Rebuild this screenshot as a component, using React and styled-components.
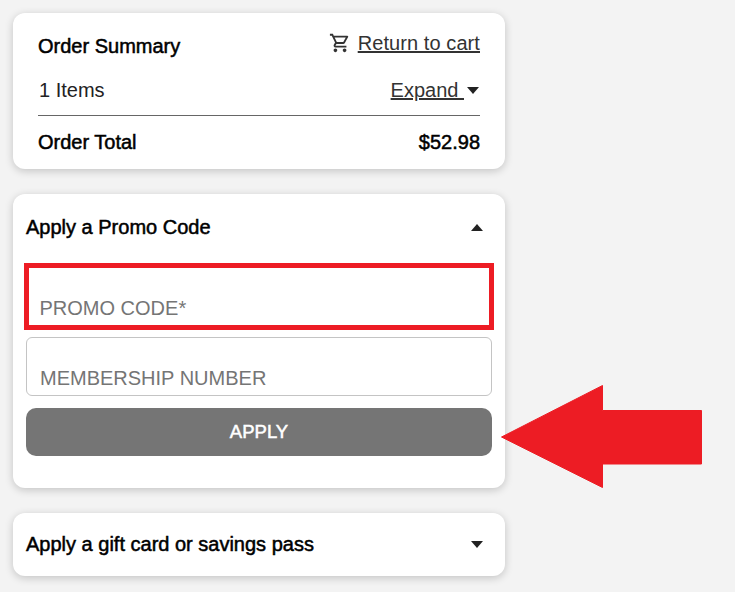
import React from "react";
import styled, { createGlobalStyle } from "styled-components";

const Global = createGlobalStyle`
  html, body { margin: 0; padding: 0; background: #f3f3f3; }
  body { font-family: "Liberation Sans", Arial, sans-serif; color: #000; }
`;
const Page = styled.div`
  position: relative;
  width: 735px;
  height: 592px;
  overflow: hidden;
  padding: 13px 0 0 13px;
  box-sizing: border-box;
  display: flex;
  flex-direction: column;
  gap: 25px;
`;
const Card = styled.section`
  width: 492px;
  box-sizing: border-box;
  background: #fff;
  border-radius: 12px;
  box-shadow: 0 2px 8px rgba(0, 0, 0, 0.2);
  padding: ${(p) => p.$pad || "0"};
  height: ${(p) => p.$h}px;
`;
const Row = styled.div`
  display: flex;
  justify-content: space-between;
  align-items: center;
  height: ${(p) => p.$h}px;
`;
const Strong = styled.span`
  font-size: 20px;
  font-weight: 400;
  -webkit-text-stroke: 0.5px #000;
  color: #000;
  margin-top: ${(p) => p.$mt || 0}px;
`;
const Plain = styled.span`
  font-size: 20px;
  color: #222;
  margin: 0 0 4px 1px;
`;
const LinkWrap = styled.span`
  display: inline-flex;
  align-items: center;
  gap: ${(p) => p.$gap}px;
  font-size: 20px;
  color: #333;
  margin: ${(p) => p.$margin};
`;
const Link = styled.a`
  color: #333;
  text-decoration: underline;
  white-space: pre;
  letter-spacing: ${(p) => p.$ls || 0}px;
`;
const Divider = styled.hr`
  border: 0;
  height: 1px;
  background: #666;
  margin: 0;
`;
const Caret = styled.svg`
  width: 14px;
  height: 7px;
  fill: #222;
  display: block;
`;
const Accordion = styled.div`
  display: flex;
  justify-content: space-between;
  align-items: center;
  box-sizing: border-box;
  height: ${(p) => p.$h}px;
  padding: 0 21px ${(p) => p.$pb || 0}px 13px;
`;
const Fields = styled.div`
  display: flex;
  flex-direction: column;
  gap: 7px;
  padding: 0 13px;
`;
const Field = styled.input`
  display: block;
  box-sizing: border-box;
  width: 466px;
  height: 59px;
  margin: 0;
  padding: 23px 13px 0;
  font: 20px "Liberation Sans", Arial, sans-serif;
  background: #fff;
  border: 1px solid #c4c4c4;
  border-radius: 6px;
  outline: none;
  &::placeholder { color: #757575; opacity: 1; }
`;
const PromoField = styled(Field)`
  width: 470px;
  height: 67px;
  margin: 0 -2px;
  padding: 23px 10.5px 0;
  border: 5px solid #ed1c24;
  border-radius: 0;
`;
const Apply = styled.button`
  display: block;
  width: 466px;
  height: 48px;
  margin-top: 5px;
  border: 0;
  border-radius: 10px;
  background: #757575;
  color: #fff;
  font: 400 18.5px "Liberation Sans", Arial, sans-serif;
  -webkit-text-stroke: 0.5px #fff;
`;
const Arrow = styled.svg`
  position: absolute;
  left: 500px;
  top: 384px;
  width: 203px;
  height: 106px;
`;

export default function App() {
  return (
    <Page>
      <Global />
      <Card $pad="0 25px" $h={156}>
        <Row $h={56}>
          <Strong $mt={10}>Order Summary</Strong>
          <LinkWrap $gap={7} $margin="4px 0 0">
            <svg width="22" height="22" viewBox="0 0 24 24" fill="#333">
              <path d="M15.55 13c.75 0 1.41-.41 1.75-1.03l3.58-6.49c.37-.66-.11-1.48-.87-1.48H5.21l-.94-2H1v2h2l3.6 7.59-1.35 2.44C4.52 15.37 5.48 17 7 17h12v-2H7l1.1-2h7.45zM6.16 6h12.15l-2.76 5H8.53L6.16 6zM7 18c-1.1 0-1.99.9-1.99 2S5.9 22 7 22s2-.9 2-2-.9-2-2-2zm10 0c-1.1 0-1.99.9-1.99 2s.89 2 1.99 2 2-.9 2-2-.9-2-2-2z" />
            </svg>
            <Link $ls={0.08}>Return to cart</Link>
          </LinkWrap>
        </Row>
        <Row $h={46}>
          <Plain>1 Items</Plain>
          <LinkWrap $gap={2} $margin="0 0 4px">
            <Link>Expand </Link>
            <Caret viewBox="0 0 14 7"><path d="M1 0h12L7 7z" /></Caret>
          </LinkWrap>
        </Row>
        <Divider />
        <Row $h={53}>
          <Strong>Order Total</Strong>
          <Strong>$52.98</Strong>
        </Row>
      </Card>
      <Card $h={294}>
        <Accordion $h={69} $pb={2}>
          <Strong>Apply a Promo Code</Strong>
          <Caret viewBox="0 0 14 7"><path d="M7 0l6 7H1z" /></Caret>
        </Accordion>
        <Fields>
          <PromoField placeholder="PROMO CODE*" />
          <Field placeholder="MEMBERSHIP NUMBER" />
          <Apply>APPLY</Apply>
        </Fields>
      </Card>
      <Card $h={63}>
        <Accordion $h={63}>
          <Strong>Apply a gift card or savings pass</Strong>
          <Caret viewBox="0 0 14 7"><path d="M1 0h12L7 7z" /></Caret>
        </Accordion>
      </Card>
      <Arrow viewBox="500 384 203 106">
        <path d="M602.5 385.5L501.5 437 602.5 487.5V464H701.5V410.5H602.5Z" fill="#ed1c24" stroke="#ed1c24" strokeWidth="1" strokeLinejoin="round" />
      </Arrow>
    </Page>
  );
}
